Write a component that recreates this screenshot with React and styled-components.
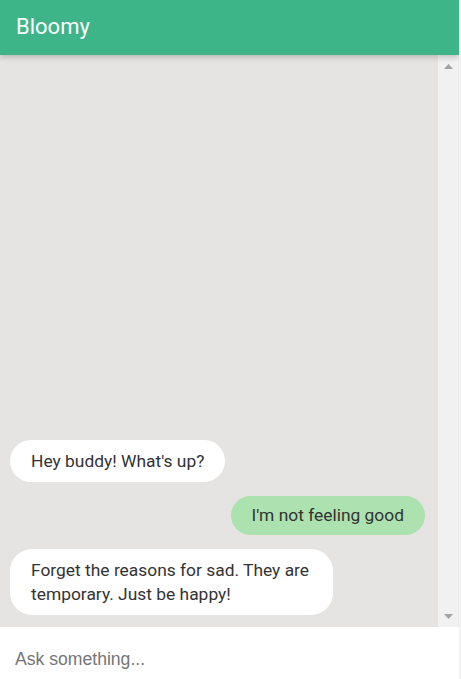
import styled, { createGlobalStyle } from "styled-components"

const GlobalStyle = createGlobalStyle`
  html, body {
    margin: 0;
    padding: 0;
    background: #f2f2f2;
    font-family: Roboto, "Liberation Sans", sans-serif;
  }
`

const Widget = styled.div`
  display: flex;
  flex-direction: column;
  width: 459px;
  height: 679px;
  background: #e5e4e2;
  overflow: hidden;
`

const Header = styled.div`
  position: relative;
  z-index: 2;
  flex: 0 0 53px;
  display: flex;
  align-items: center;
  padding: 0 16px 2px;
  background: #3db589;
  box-shadow: 0 2px 6px rgba(0, 0, 0, 0.22);
  color: #ffffff;
  font-size: 22px;
`

const Body = styled.div`
  flex: 1;
  display: flex;
  min-height: 0;
`

const Messages = styled.div`
  flex: 1;
  display: flex;
  flex-direction: column;
  justify-content: flex-end;
  gap: 14px;
  padding: 0 13px 12px 10px;
`

const ScrollTrack = styled.div`
  flex: 0 0 21px;
  display: flex;
  flex-direction: column;
  justify-content: space-between;
  align-items: center;
  padding: 9px 0 8px;
  background: #f1f1f1;
  border-right: 1px solid #e9e9e9;
  box-sizing: border-box;
`

const Bubble = styled.div`
  align-self: ${(p) => (p.mine ? "flex-end" : "flex-start")};
  max-width: 281px;
  padding: ${(p) => (p.mine ? "7px 21px 8px 20px" : "9px 21px")};
  border-radius: 22px;
  background: ${(p) => (p.mine ? "#ace1b0" : "#ffffff")};
  color: #333333;
  font-size: 17.4px;
  line-height: 24px;
`

const InputBar = styled.div`
  flex: 0 0 52px;
  display: flex;
  align-items: center;
  background: #ffffff;
`

const AskInput = styled.input`
  flex: 1;
  border: none;
  outline: none;
  padding: 13px 15px 0;
  background: transparent;
  font-family: "Liberation Sans", Arial, sans-serif;
  font-size: 17.6px;
  color: #333333;

  &::placeholder {
    color: #757575;
  }
`

function Arrow({ down }) {
    return (
        <svg width="9" height="5" viewBox="0 0 9 5">
            <polygon points={down ? "0,0 9,0 4.5,5" : "0,5 9,5 4.5,0"} fill="#a3a3a3" />
        </svg>
    )
}

function App() {
    return (
        <>
            <GlobalStyle />
            <Widget>
                <Header>Bloomy</Header>
                <Body>
                    <Messages>
                        <Bubble>Hey buddy! What's up?</Bubble>
                        <Bubble mine>I'm not feeling good</Bubble>
                        <Bubble>Forget the reasons for sad. They are temporary. Just be happy!</Bubble>
                    </Messages>
                    <ScrollTrack>
                        <Arrow />
                        <Arrow down />
                    </ScrollTrack>
                </Body>
                <InputBar>
                    <AskInput placeholder="Ask something..." />
                </InputBar>
            </Widget>
        </>
    )
}

export default App
